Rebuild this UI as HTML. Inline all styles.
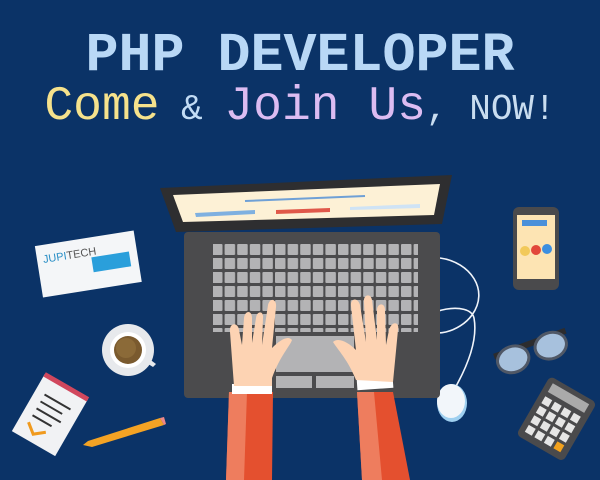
<!DOCTYPE html>
<html><head><style>
html,body{margin:0;padding:0;background:#0b3367;}
body{width:600px;height:480px;overflow:hidden;position:relative;}
.t{position:absolute;left:0;width:600px;text-align:center;font-family:"Liberation Mono",monospace;white-space:nowrap;}
</style></head><body>
<svg width="600" height="480" style="position:absolute;left:0;top:0">
<defs>
<pattern id="k" x="212" y="244" width="12.6" height="14" patternUnits="userSpaceOnUse">
<rect x="0" y="0" width="10.5" height="11" rx="1" fill="#b3b3b5"/></pattern>
</defs>
<g transform="rotate(-9 88 262)"><rect x="38" y="238" width="100" height="52" fill="#f4f6f8"/>
<rect x="92" y="258" width="38" height="15" fill="#2a9fdb"/>
<text x="44" y="256" font-family="Liberation Sans,sans-serif" font-size="11" fill="#2a8fc6">JUPI<tspan fill="#555">TECH</tspan></text></g>
<circle cx="128" cy="350" r="26" fill="#e7e9ec"/><path d="M148 358 l8 6 -3 3 -8 -5z" fill="#e7e9ec"/>
<circle cx="128" cy="350" r="18" fill="#fff"/><circle cx="128" cy="350" r="14" fill="#7a5a2e"/><circle cx="126" cy="348" r="10" fill="#8b6a38"/>
<g transform="rotate(30 50 415)"><rect x="25" y="382" width="50" height="66" fill="#f1f2f4"/>
<rect x="25" y="380" width="50" height="5" fill="#d1475d"/>
<path d="M35 400h30M35 408h25M35 416h28M35 424h22" stroke="#333" stroke-width="2"/>
<path d="M35 432l10 8 10-8" stroke="#f09a1e" stroke-width="3" fill="none"/></g>
<path d="M88 441 L160 418 L164 425 L92 447 L83 445z" fill="#f4a324"/><path d="M160 418l4-1 2 7-2 1z" fill="#e88"/>
<rect x="513" y="207" width="46" height="83" rx="6" fill="#4a4a4c"/><rect x="517" y="215" width="38" height="64" fill="#fde4b3"/>
<circle cx="525" cy="251" r="5" fill="#f2c95a"/><circle cx="536" cy="250" r="5" fill="#e2473a"/><circle cx="547" cy="249" r="5" fill="#3d8fe0"/>
<rect x="522" y="220" width="25" height="6" fill="#4a90d9"/>
<g transform="rotate(-20 530 350)"><rect x="494" y="341" width="76" height="6" fill="#2c2c2e"/>
<ellipse cx="511" cy="353" rx="16" ry="13" fill="#a7c1dd" stroke="#505866" stroke-width="3"/>
<ellipse cx="551" cy="353" rx="16" ry="13" fill="#a7c1dd" stroke="#505866" stroke-width="3"/></g>
<g transform="rotate(30 557 418)"><rect x="530" y="385" width="54" height="68" rx="5" fill="#4a4a4c"/>
<rect x="536" y="390" width="42" height="10" fill="#aaa"/>
<g fill="#e5e5e5"><rect x="536" y="405" width="8" height="8"/><rect x="547" y="405" width="8" height="8"/><rect x="558" y="405" width="8" height="8"/><rect x="569" y="405" width="8" height="8"/>
<rect x="536" y="416" width="8" height="8"/><rect x="547" y="416" width="8" height="8"/><rect x="558" y="416" width="8" height="8"/><rect x="569" y="416" width="8" height="8"/>
<rect x="536" y="427" width="8" height="8"/><rect x="547" y="427" width="8" height="8"/><rect x="558" y="427" width="8" height="8"/><rect x="569" y="427" width="8" height="8"/>
<rect x="536" y="438" width="8" height="8"/><rect x="547" y="438" width="8" height="8"/><rect x="558" y="438" width="8" height="8"/></g><rect x="569" y="438" width="8" height="8" fill="#f2a11d"/></g>
<path d="M440 258 C470 262 490 290 472 315 C460 332 430 340 425 325 C420 310 470 300 474 318 C478 340 468 365 455 388" stroke="#f0f4fa" stroke-width="1.6" fill="none"/>
<ellipse cx="452" cy="403" rx="15" ry="19" fill="#9fd0f0"/><ellipse cx="451" cy="401" rx="14" ry="17" fill="#f2f6fa"/>
<rect x="184" y="232" width="256" height="166" rx="4" fill="#4b4b4d"/>
<path d="M160 188 L452 175 L442 224 L176 232z" fill="#2e2e30"/>
<path d="M173 195 L440 184 L434 215 L183 222z" fill="#fdf1d6"/>
<path d="M195 213 L255 210 L255 214 L196 217z" fill="#7fb0e0"/><path d="M276 210 L330 208 L330 212 L276 214z" fill="#e0584a"/><path d="M350 207 L420 204 L420 208 L350 210z" fill="#cfe3f5"/>
<path d="M245 201 L365 196" stroke="#6fa0d6" stroke-width="2"/>
<rect x="213" y="244" width="205" height="88" fill="url(#k)"/>
<rect x="276" y="336" width="78" height="36" fill="#b3b3b5"/>
<rect x="276" y="376" width="36" height="12" fill="#b3b3b5"/><rect x="316" y="376" width="38" height="12" fill="#b3b3b5"/>
<path d="M229 392 L273 392 L272 480 L226 480z" fill="#e4502f"/><path d="M229 392 L247 392 L244 480 L226 480z" fill="#ee7d5e"/>
<path d="M357 392 L393 392 L410 480 L362 480z" fill="#e4502f"/><path d="M357 392 L374 392 L382 480 L362 480z" fill="#ee7d5e"/>
<rect x="232" y="384" width="40" height="10" fill="#fff"/><rect x="357" y="378" width="36" height="11" fill="#fff" transform="rotate(-4 375 383)"/>
<path fill="#fdd3b3" d="M234 386 L230 332 C229 322 238 322 239 330 L242 345 L244 318 C245 310 252 310 252 318 L252 343 L256 318 C257 310 264 311 263 318 L262 345 L268 305 C270 297 277 299 276 307 L272 348 C280 340 288 335 292 340 C290 346 280 356 272 378 L272 386z"/>
<path fill="#fdd3b3" d="M393 382 L398 330 C400 322 392 320 389 330 L386 345 L385 310 C385 302 377 303 377 310 L377 340 L372 300 C371 293 363 294 364 302 L366 342 L360 305 C358 297 350 298 351 306 L356 350 C348 342 338 337 333 342 C338 350 348 360 356 380z"/>
</svg>
<div class="t" style="top:26px;font-size:55px;font-weight:bold;color:#b9d8f6;line-height:60px;">PHP DEVELOPER</div>
<div class="t" style="top:82px;line-height:50px;"><span style="font-size:48px;color:#f6e28c">Come</span><span style="font-size:36px;color:#c2dcf5"> &amp; </span><span style="font-size:48px;color:#dcbcf2">Join Us</span><span style="font-size:36px;color:#c9ddf0">, NOW!</span></div>
</body></html>
